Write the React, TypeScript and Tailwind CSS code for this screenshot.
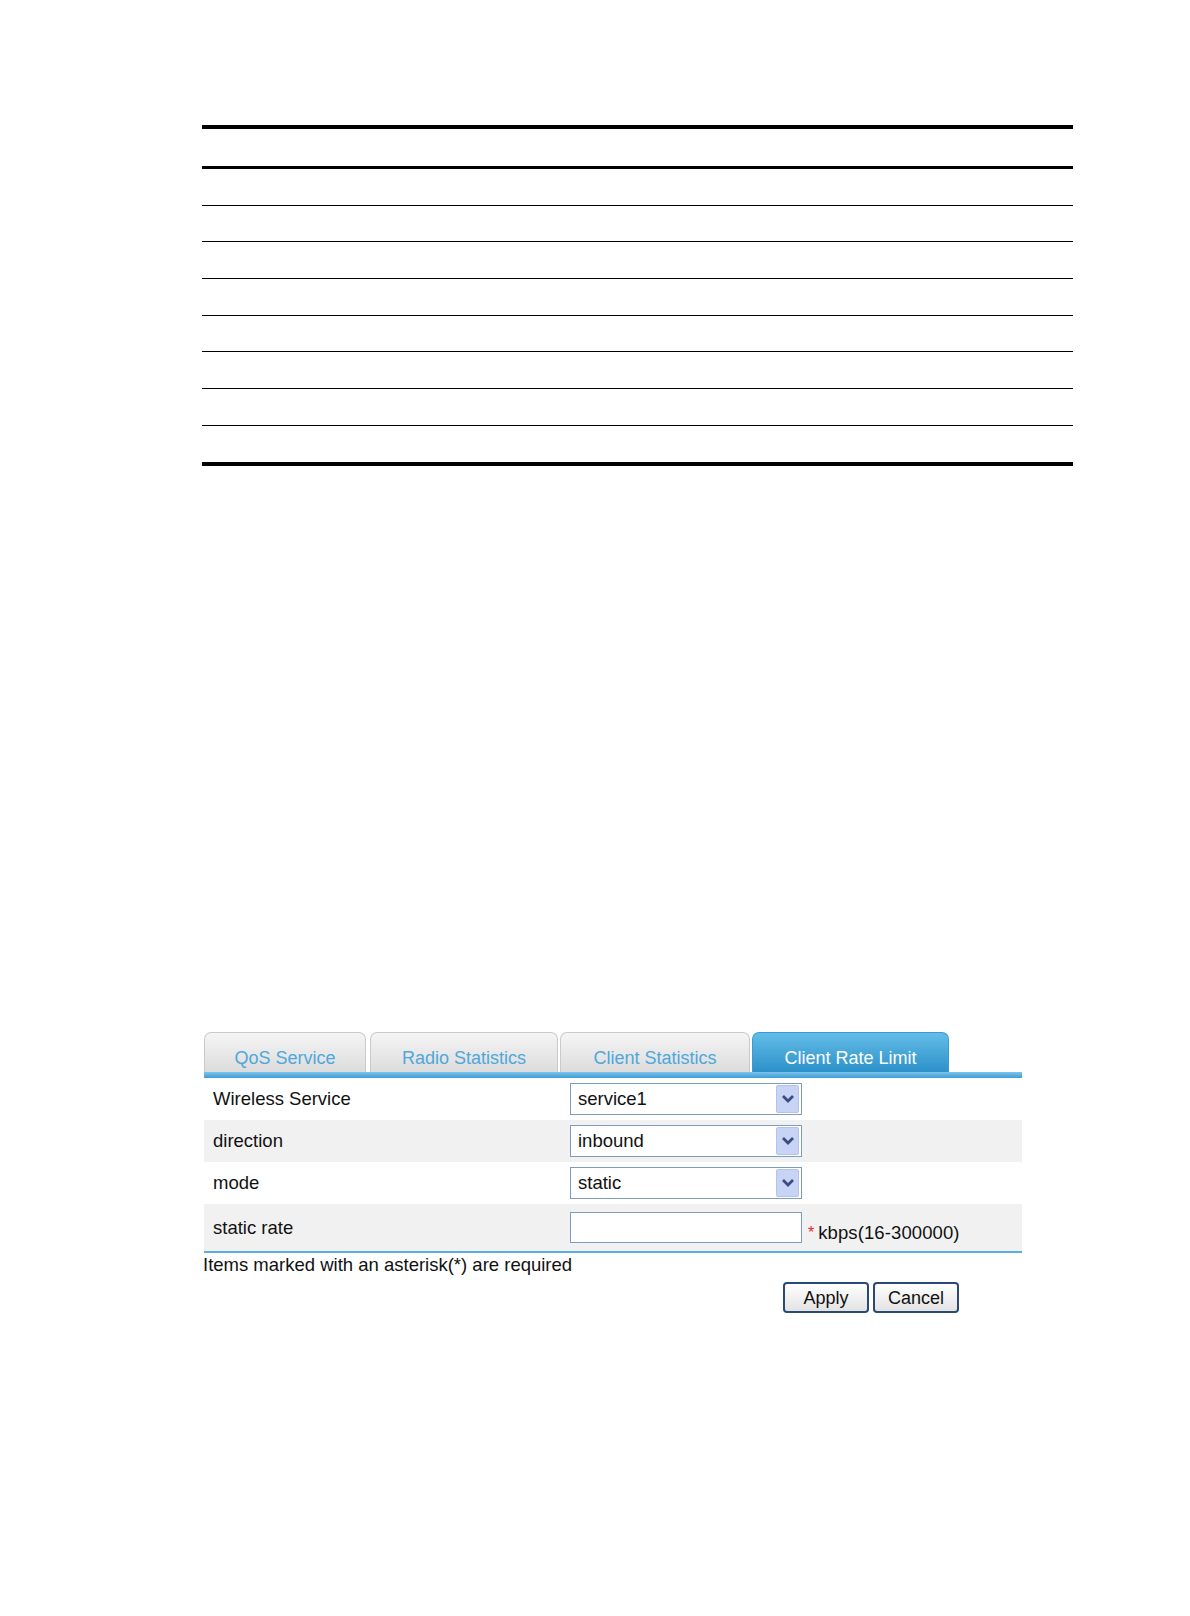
import React from 'react';

// border-box heights, borders included
const tableRows = [40, 37, 36, 37, 37, 36, 37, 37, 40];

const tabs = [
  { label: 'QoS Service', w: 'w-[162px]', ml: 'ml-0', active: false },
  { label: 'Radio Statistics', w: 'w-[188px]', ml: 'ml-[4px]', active: false },
  { label: 'Client Statistics', w: 'w-[190px]', ml: 'ml-[2px]', active: false },
  { label: 'Client Rate Limit', w: 'w-[197px]', ml: 'ml-[2px]', active: true },
];

const Chevron = () => (
  <svg width="14" height="10" viewBox="0 0 14 10">
    <path d="M2 2 L7 7 L12 2" fill="none" stroke="#3a4c80" strokeWidth="2.8" />
  </svg>
);

const SelectBox = ({ value }: { value: string }) => (
  <div className="flex items-center w-[232px] h-[32px] border border-[#7f9db9] bg-white pl-[7px] pr-[2px]">
    <span className="flex-grow">{value}</span>
    <span className="flex items-center justify-center w-[23px] h-[28px] bg-[#c7d4f6] border border-[#b3c3ee] rounded-[2px]">
      <Chevron />
    </span>
  </div>
);

const FormRow = ({ label, gray, h, children }: { label: string; gray?: boolean; h: string; children: React.ReactNode }) => (
  <div className={`flex items-center ${h} ${gray ? 'bg-[#f1f1f1]' : 'bg-white'}`}>
    <span className="w-[366px] shrink-0 pl-[9px]">{label}</span>
    {children}
  </div>
);

export default function App() {
  return (
    <div className="min-h-[1616px] w-[1190px] bg-white text-[#111] pt-[125px]" style={{ fontFamily: '"Liberation Sans", Arial, sans-serif' }}>
      {/* ruled table, empty */}
      <div className="ml-[202px] w-[871px] border-t-4 border-black">
        {tableRows.map((h, i) => (
          <div
            key={i}
            className={i === 0 ? 'border-b-[3px] border-black' : i === tableRows.length - 1 ? 'border-b-4 border-black' : 'border-b-[1.5px] border-black'}
            style={{ height: h }}
          />
        ))}
      </div>

      {/* client rate limit form */}
      <div className="ml-[204px] mt-[566px] w-[818px] text-[18.5px]">
        <div className="flex items-end h-[40px]">
          {tabs.map((t) => (
            <div
              key={t.label}
              className={`${t.w} ${t.ml} h-[40px] rounded-t-[7px] border border-b-0 text-center pt-[13px] leading-[24px] text-[18px] ${
                t.active
                  ? 'bg-gradient-to-b from-[#62bde8] to-[#2b91c9] border-[#3a9bd1] text-white'
                  : 'bg-gradient-to-b from-[#f5f5f5] to-[#dcdcdc] border-[#cacaca] text-[#4fa7dc]'
              }`}
            >
              {t.label}
            </div>
          ))}
        </div>
        <div className="h-[6px] bg-gradient-to-b from-[#7cc4ea] to-[#3a9dd5]" />

        <FormRow label="Wireless Service" h="h-[42px]">
          <SelectBox value="service1" />
        </FormRow>
        <FormRow label="direction" gray h="h-[42px]">
          <SelectBox value="inbound" />
        </FormRow>
        <FormRow label="mode" h="h-[42px]">
          <SelectBox value="static" />
        </FormRow>
        <FormRow label="static rate" gray h="h-[47px]">
          <div className="w-[232px] h-[31px] border border-[#7f9db9] bg-white" />
          <span className="ml-[6px] mt-[10px] flex items-center">
            <span className="text-[#e3262c] text-[16px] mr-[4px]">*</span>
            <span className="tracking-[0.1px]">kbps(16-300000)</span>
          </span>
        </FormRow>
        <div className="h-[2px] bg-[#5aaee0]" />

        <div className="leading-[24px] -ml-[1px]">Items marked with an asterisk(*) are required</div>

        <div className="flex mt-[5px] ml-[579px] gap-[4px]">
          <button className="w-[86px] h-[31px] rounded-[4px] border-2 border-[#2b4a72] bg-gradient-to-b from-white to-[#e3e3e3] text-[18px] leading-none">
            Apply
          </button>
          <button className="w-[86px] h-[31px] rounded-[4px] border-2 border-[#2b4a72] bg-gradient-to-b from-white to-[#e3e3e3] text-[18px] leading-none">
            Cancel
          </button>
        </div>
      </div>
    </div>
  );
}
